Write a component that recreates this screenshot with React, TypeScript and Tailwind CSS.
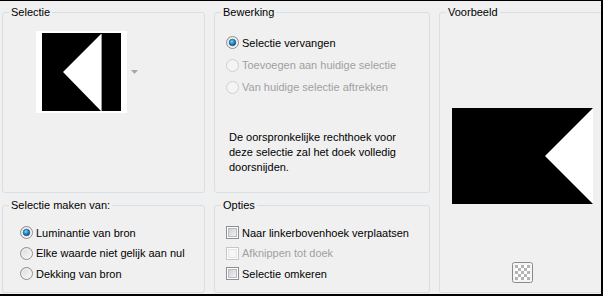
import type { ReactNode } from "react";

const FONT = "font-['Liberation_Sans',Arial,sans-serif]";

function Group({ label, className, children }: { label: string; className?: string; children?: ReactNode }) {
  return (
    <div className={`relative rounded-[3px] border border-[#d5dfe5] ${className ?? ""}`}>
      <span className="absolute -top-[8px] left-[6px] bg-[#f0f0f0] px-[2px] text-[11px] leading-[14px] text-black">
        {label}
      </span>
      {children}
    </div>
  );
}

function Radio({ checked = false, disabled = false }: { checked?: boolean; disabled?: boolean }) {
  return (
    <svg width="13" height="13" viewBox="0 0 13 13" className="shrink-0">
      <defs>
        <linearGradient id="rfill" x1="0" y1="0" x2="1" y2="1">
          <stop offset="0" stopColor="#d9d9d9" />
          <stop offset="1" stopColor="#fbfbfb" />
        </linearGradient>
        <radialGradient id="rdot" cx="0.4" cy="0.35" r="0.7">
          <stop offset="0" stopColor="#7ed3f5" />
          <stop offset="0.55" stopColor="#1c8ac4" />
          <stop offset="1" stopColor="#0b3e66" />
        </radialGradient>
      </defs>
      <circle cx="6.5" cy="6.5" r="6" fill={disabled ? "#f4f4f4" : "url(#rfill)"} stroke={disabled ? "#cfcfcf" : "#8e8f8f"} />
      {!disabled && <circle cx="6.5" cy="6.5" r="4.5" fill="none" stroke="#f2f2f2" strokeWidth="0.8" />}
      {checked && <circle cx="6.5" cy="6.5" r="3.3" fill="url(#rdot)" stroke="#1b4d72" strokeWidth="0.6" />}
    </svg>
  );
}

function Check({ disabled = false }: { disabled?: boolean }) {
  return (
    <svg width="13" height="13" viewBox="0 0 13 13" className="shrink-0">
      <defs>
        <linearGradient id="cfill" x1="0" y1="0" x2="1" y2="1">
          <stop offset="0" stopColor="#cbcfd5" />
          <stop offset="1" stopColor="#f4f4f4" />
        </linearGradient>
      </defs>
      <rect x="0.5" y="0.5" width="12" height="12" fill="#fff" stroke={disabled ? "#c6c6c6" : "#8e8f8f"} />
      <rect x="2.5" y="2.5" width="8" height="8" fill={disabled ? "#f6f6f6" : "url(#cfill)"} stroke={disabled ? "#e6e6e6" : "#b8bcc2"} />
    </svg>
  );
}

function Row({ control, text, disabled = false, h }: { control: ReactNode; text: string; disabled?: boolean; h: string }) {
  return (
    <div className={`flex items-center gap-[3px] ${h}`}>
      {control}
      <span className={`text-[11px] leading-[14px] ${disabled ? "text-[#a0a0a0]" : "text-black"}`}>{text}</span>
    </div>
  );
}

export default function App() {
  return (
    <div className={`h-[296px] w-[603px] overflow-hidden border-t border-r-2 border-b-2 border-black bg-[#f0f0f0] pt-[11px] pl-[2px] ${FONT}`}>
      <div className="grid grid-cols-[203px_216px_163px] grid-rows-[181px_88px] gap-x-[9px] gap-y-[12px]">
        {/* Selectie */}
        <Group label="Selectie">
          <div className="flex items-center pl-[33px] pt-[18px]">
            <svg width="91" height="82" viewBox="0 0 91 82">
              <rect width="91" height="82" fill="#fff" />
              <rect x="6" y="2" width="79" height="78" fill="#000" />
              <polygon points="27,41 65,3 65,80" fill="#fff" />
              <line x1="65.5" y1="3" x2="65.5" y2="80" stroke="#9a9a9a" strokeWidth="1" />
            </svg>
            <svg width="7" height="4" viewBox="0 0 7 4" className="ml-[4px]">
              <polygon points="0,0 7,0 3.5,4" fill="#a8a8a8" />
            </svg>
          </div>
        </Group>

        {/* Bewerking */}
        <Group label="Bewerking">
          <div className="flex flex-col pl-[11px] pt-[18px]">
            <Row h="h-[23px]" control={<Radio checked />} text="Selectie vervangen" />
            <Row h="h-[22px]" control={<Radio disabled />} text="Toevoegen aan huidige selectie" disabled />
            <Row h="h-[22px]" control={<Radio disabled />} text="Van huidige selectie aftrekken" disabled />
            <p className="mt-[32px] pl-[3px] text-[11px] leading-[15px] text-black">
              De oorspronkelijke rechthoek voor
              <br />
              deze selectie zal het doek volledig
              <br />
              doorsnijden.
            </p>
          </div>
        </Group>

        {/* Voorbeeld */}
        <Group label="Voorbeeld" className="row-span-2">
          <div className="flex flex-col pl-[12px] pt-[95px]">
            <svg width="141" height="96" viewBox="0 0 141 96">
              <rect width="141" height="96" fill="#000" />
              <polygon points="93,48 141,0 141,96" fill="#fff" />
            </svg>
            <svg width="21" height="21" viewBox="0 0 21 21" className="ml-[60px] mt-[58px]">
              <rect x="0.5" y="0.5" width="20" height="20" rx="2" fill="#f4f4f4" stroke="#8a8a8a" />
              <rect x="3" y="3" width="15" height="15" fill="#fff" />
              {[0, 1, 2, 3, 4].map((r) =>
                [0, 1, 2, 3, 4].map((c) =>
                  (r + c) % 2 === 0 ? <rect key={`${r}-${c}`} x={3 + c * 3} y={3 + r * 3} width="3" height="3" fill="#b4b4b4" /> : null
                )
              )}
            </svg>
          </div>
        </Group>

        {/* Selectie maken van */}
        <Group label="Selectie maken van:">
          <div className="flex flex-col pl-[17px] pt-[16px]">
            <Row h="h-[21px]" control={<Radio checked />} text="Luminantie van bron" />
            <Row h="h-[20px]" control={<Radio />} text="Elke waarde niet gelijk aan nul" />
            <Row h="h-[21px]" control={<Radio />} text="Dekking van bron" />
          </div>
        </Group>

        {/* Opties */}
        <Group label="Opties">
          <div className="flex flex-col pl-[11px] pt-[16px]">
            <Row h="h-[21px]" control={<Check />} text="Naar linkerbovenhoek verplaatsen" />
            <Row h="h-[20px]" control={<Check disabled />} text="Afknippen tot doek" disabled />
            <Row h="h-[21px]" control={<Check />} text="Selectie omkeren" />
          </div>
        </Group>
      </div>
    </div>
  );
}
